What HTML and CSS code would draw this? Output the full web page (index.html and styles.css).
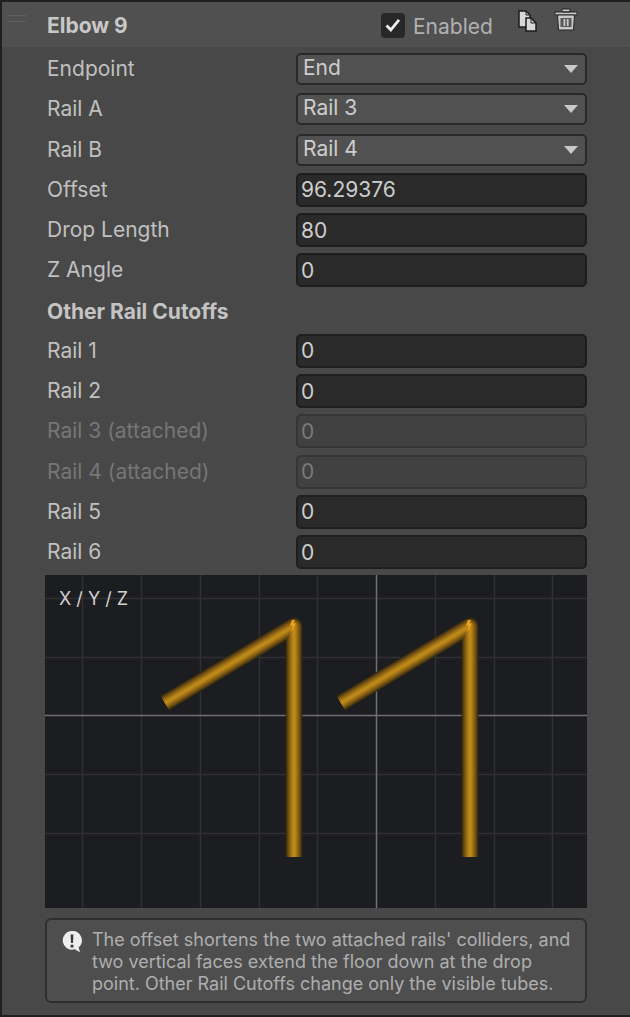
FILE: index.html
```html
<!DOCTYPE html>
<html lang="en">
<head>
<meta charset="UTF-8">
<meta name="viewport" content="width=device-width, initial-scale=1.0">
<title>Elbow 9</title>
<link rel="stylesheet" href="styles.css">
</head>
<body>

<div class="inspector">
    <header class="head">
        <span class="grip"></span>
        <h1>Elbow 9</h1>
        <label class="enabled"><span class="check"><svg width="18" height="18" viewBox="0 0 18 18"><path d="M2.500 9.500l4.300 4.300 8.200-10" fill="none" stroke="#eee" stroke-width="2.800"/></svg></span><span class="enabled-text">Enabled</span></label>
        <svg class="icon-copy" width="22" height="24" viewBox="0 0 22 24">
            <path d="M2 2h7l4 4v12H2z" fill="#d8d8d8" stroke="#1a1a1a" stroke-width="1.500"/>
            <path d="M9 2v4h4" fill="none" stroke="#1a1a1a"/>
            <path d="M9 9h5l5 5v8H9z" fill="#d8d8d8" stroke="#1a1a1a" stroke-width="1.500"/>
            <path d="M14 9v5h5" fill="none" stroke="#1a1a1a"/>
        </svg>
        <svg class="icon-trash" width="24" height="26" viewBox="0 0 24 26">
            <path d="M1 5h22v3H1zM8 2h8v3H8z" fill="#c8c8c8" stroke="#222"/>
            <path d="M3.500 8h17l-1 15h-15z" fill="#c8c8c8" stroke="#222"/>
            <path d="M6.500 11h11v9h-11z" fill="#585858"/>
            <path d="M9.500 12h1.800v7H9.500zM12.800 12h1.800v7h-1.800z" fill="#c8c8c8"/>
        </svg>
    </header>

    <div class="fields">
        <div class="row"><span class="name">Endpoint</span><div class="select">End<i></i></div></div>
        <div class="row"><span class="name">Rail A</span><div class="select">Rail 3<i></i></div></div>
        <div class="row"><span class="name">Rail B</span><div class="select">Rail 4<i></i></div></div>
        <div class="row"><span class="name">Offset</span><div class="input">96.29376</div></div>
        <div class="row"><span class="name">Drop Length</span><div class="input">80</div></div>
        <div class="row"><span class="name">Z Angle</span><div class="input">0</div></div>

        <h2>Other Rail Cutoffs</h2>

        <div class="row"><span class="name">Rail 1</span><div class="input">0</div></div>
        <div class="row"><span class="name">Rail 2</span><div class="input">0</div></div>
        <div class="row off"><span class="name">Rail 3 (attached)</span><div class="input">0</div></div>
        <div class="row off"><span class="name">Rail 4 (attached)</span><div class="input">0</div></div>
        <div class="row"><span class="name">Rail 5</span><div class="input">0</div></div>
        <div class="row"><span class="name">Rail 6</span><div class="input">0</div></div>
    </div>

    <div class="preview">
        <svg width="542" height="333" viewBox="0 0 542 333">
            <defs>
                <g id="tube" fill="none" stroke-linejoin="round">
                    <path d="M120 128L249 51V282" stroke="#2f2513" stroke-width="17"/>
                    <path d="M120 128L249 51V282" stroke="#433213" stroke-width="15.500"/>
                    <path d="M120 128L249 51V282" stroke="#5a4113" stroke-width="14"/>
                    <path d="M120 128L249 51V282" stroke="#6e4f13" stroke-width="12"/>
                    <path d="M120 128L249 51V282" stroke="#825d14" stroke-width="10"/>
                    <path d="M120 128L249 51V282" stroke="#946a15" stroke-width="8"/>
                    <path d="M120 128L249 51V282" stroke="#a57616" stroke-width="6"/>
                    <path d="M120 128L249 51V282" stroke="#b48017" stroke-width="4"/>
                    <path d="M120 128L249 51V282" stroke="#c08a1a" stroke-width="2"/>
                    <path d="M247 45l-2 6 3-1-2 8 5-10-3 1 2-4z" fill="#f2a51f"/>
                </g>
            </defs>
            <g class="grid">
                <path d="M37.500 0V333M96.500 0V333M155.500 0V333M214.500 0V333M272.500 0V333M390.500 0V333M449.500 0V333M507.500 0V333"/>
                <path d="M0 23.500H542M0 82.500H542M0 199.500H542M0 258.500H542"/>
            </g>
            <path class="axis" d="M331.500 0V333M0 140.500H542"/>
            <use href="#tube"/>
            <use href="#tube" x="176"/>
        </svg>
        <span class="axes">X / Y / Z</span>
    </div>

    <div class="help">
        <svg class="help-icon" width="22" height="25" viewBox="0 0 24 28">
            <path d="M12 1a10.500 10.500 0 1 0 3 20.600l6 3.400-1.600-5.600A10.500 10.500 0 0 0 12 1z" fill="#eee"/>
            <path d="M10.400 5h3.200l-.5 9.500h-2.200zM10.400 16.500h3.200v3h-3.200z" fill="#3a3a3a"/>
        </svg>
        <p>The offset shortens the two attached rails' colliders, and two vertical faces extend the floor down at the drop point. Other Rail Cutoffs change only the visible tubes.</p>
    </div>
</div>

</body>
</html>
```

FILE: styles.css
```css
body {
    margin: 0;
    background-color: #1f1f1f;
    font-family: Inter, "Liberation Sans", sans-serif;
    color: #c8c8c8;
}

.inspector {
    margin: 2px 0 0 2px;
    height: 1013px;
    background-color: #484848;
    overflow: hidden;
}

/* Header */
.head {
    display: flex;
    align-items: center;
    height: 45px;
    padding-left: 45px;
    background-color: #505050;
    position: relative;
}

.grip {
    position: absolute;
    left: 6px;
    top: 13px;
    width: 18px;
    height: 5px;
    border-top: 1px solid #5f5f5f;
    border-bottom: 1px solid #5f5f5f;
}

.head h1 {
    margin: 0 0 -2px;
    width: 334px;
    font-size: 21px;
    font-weight: 700;
    color: #c8c8c8;
}

.enabled {
    display: flex;
    align-items: center;
    width: 136px;
    margin-top: 1px;
    font-size: 21px;
    color: #b0b0b0;
}

.enabled-text {
    margin-top: 2px;
}

.check {
    display: flex;
    align-items: center;
    justify-content: center;
    width: 24px;
    height: 25px;
    margin-right: 8px;
    background-color: #282828;
    border-radius: 4px;
}

.icon-copy {
    margin: -8px 15px 0 0;
}

.icon-trash {
    margin-top: -9px;
}

/* Rows */
.fields {
    padding: 5px 43px 0 45px;
}

.row {
    display: flex;
    align-items: center;
    height: 34px;
    margin-bottom: 6.3px;
}

.name {
    width: 249px;
    padding-bottom: 1px;
    font-size: 21px;
    color: #c0c0c0;
}

.select,
.input {
    flex: 1;
    box-sizing: border-box;
    height: 32px;
    display: flex;
    align-items: center;
    font-size: 21px;
    border-radius: 5px;
    color: #cdcdcd;
}

.select {
    padding: 0 0 3px 5px;
    background-color: #515151;
    border: 2px solid #292929;
    position: relative;
}

.select i {
    position: absolute;
    right: 7px;
    top: 10px;
    border-left: 7px solid transparent;
    border-right: 7px solid transparent;
    border-top: 8px solid #c8c8c8;
}

.input {
    height: 34px;
    padding-left: 3px;
    background-color: #2a2a2a;
    border: 2px solid #1e1e1e;
}

.off .name {
    color: #767676;
}

.off .input {
    background-color: #414141;
    border-color: #353535;
    color: #7a7a7a;
}

.fields h2 {
    margin: 0;
    height: 40px;
    line-height: 36px;
    font-size: 21px;
    font-weight: 700;
    color: #c4c4c4;
}

/* Preview */
.preview {
    position: relative;
    width: 542px;
    height: 333px;
    margin: -1px 0 0 43px;
    background-color: #1c1d21;
}

.preview svg {
    display: block;
}

.grid path {
    stroke: #303134;
    stroke-width: 1.5;
    fill: none;
}

.axis {
    stroke: #707173;
    stroke-width: 1.5;
    fill: none;
}

.axes {
    position: absolute;
    left: 14px;
    top: 13px;
    font-size: 18px;
    color: #d0d0d0;
}

/* Help box */
.help {
    display: flex;
    gap: 9px;
    box-sizing: border-box;
    width: 542px;
    height: 85px;
    margin: 10px 0 0 43px;
    padding: 9px 2px 0 14px;
    background-color: #4e4e4e;
    border: 2px solid #2e2e2e;
    border-radius: 6px;
}

.help-icon {
    flex: none;
    margin-top: 1px;
}

.help p {
    margin: 0;
    font-size: 18px;
    line-height: 22px;
    color: #aeaeae;
}
```
